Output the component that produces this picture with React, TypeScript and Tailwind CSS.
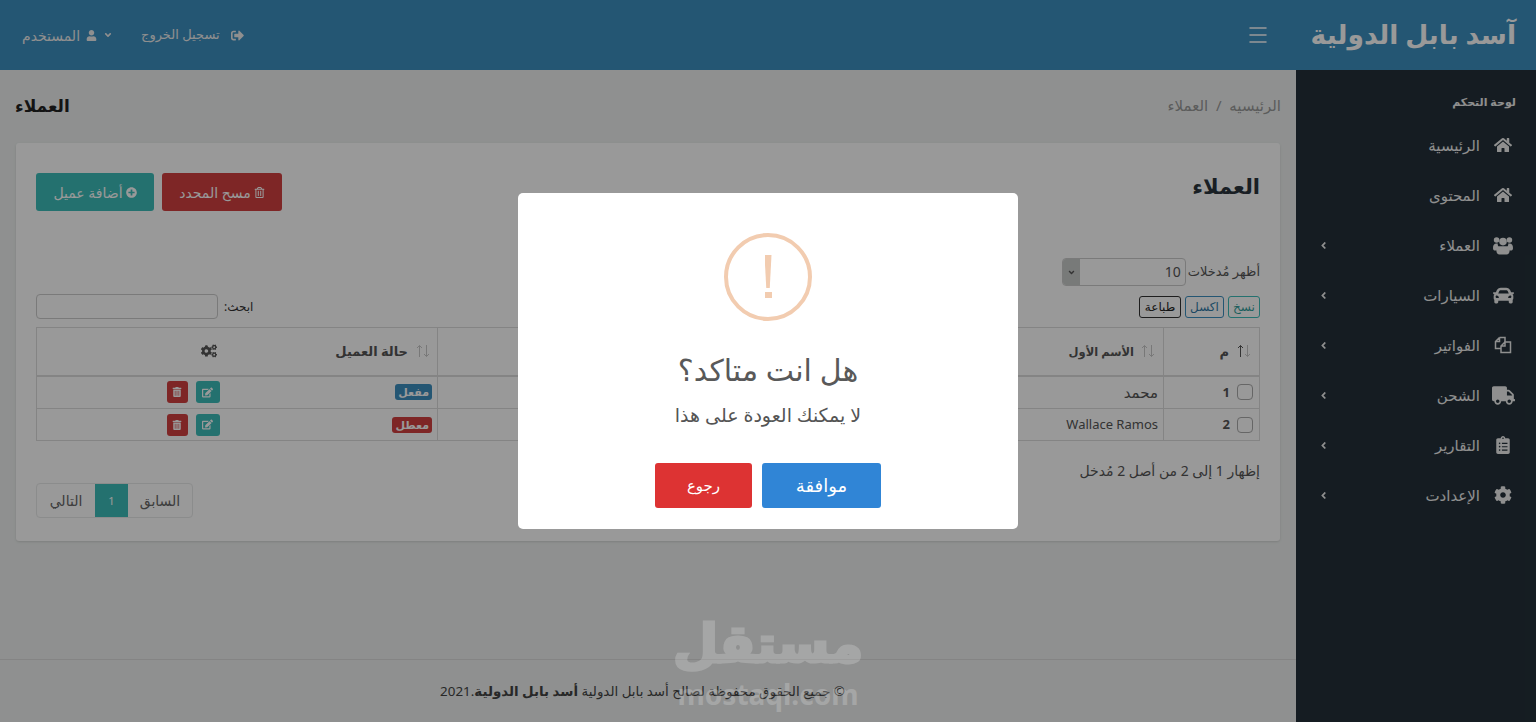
import React from 'react';
import {
    FaAngleDown,
    FaAngleLeft,
    FaCar,
    FaClipboardList,
    FaCog,
    FaCogs,
    FaEdit,
    FaHome,
    FaPlusCircle,
    FaRegTrashAlt,
    FaSignOutAlt,
    FaTrashAlt,
    FaTruck,
    FaUser,
} from 'react-icons/fa';
import { Menu } from 'lucide-react';

const font = 'font-["Noto_Sans","DejaVu_Sans",sans-serif]';

const UsersIcon = () => (
    <svg width="20" height="19" viewBox="0 0 20 19" fill="currentColor">
        <circle cx="3.6" cy="4" r="2.8" />
        <circle cx="16.4" cy="4" r="2.8" />
        <circle cx="10" cy="5.6" r="3.8" />
        <path d="M0 12c0-3 1.2-4.6 3.4-4.6h1.4c-.3 1.400.3 2.800 1.300 3.700-1.400.7-2.100 1.800-2.300 3.300H1.500C.6 14.400 0 13.500 0 12z" />
        <path d="M20 12c0-3-1.200-4.600-3.400-4.600h-1.400c.3 1.400-.3 2.800-1.300 3.700 1.400.7 2.100 1.800 2.300 3.300h2.300c.9 0 1.500-.9 1.500-2.400z" />
        <path d="M6.500 10.200h7c2 0 3.100 1.600 3.100 4.600 0 2.400-1.300 3.800-3.100 3.800h-7c-1.800 0-3.100-1.400-3.100-3.800 0-3 1.100-4.600 3.100-4.600z" />
    </svg>
);

const FilesIcon = () => (
    <svg width="18" height="18" viewBox="0 0 18 18" fill="none" stroke="currentColor" strokeWidth="1.5">
        <path d="M5.500 1.500H11V6M5.500 1.500l-4 4v7H7M5.500 1.500v4h-4" />
        <path d="M11 6h5.500v10.500H7V10zM11 6v4H7" />
    </svg>
);

const menuItems = [
    { label: 'الرئيسية', icon: <FaHome size={18} />, sub: false },
    { label: 'المحتوى', icon: <FaHome size={18} />, sub: false },
    { label: 'العملاء', icon: <UsersIcon />, sub: true },
    { label: 'السيارات', icon: <FaCar size={21} />, sub: true },
    { label: 'الفواتير', icon: <FilesIcon />, sub: true },
    { label: 'الشحن', icon: <FaTruck size={23} />, sub: true },
    { label: 'التقارير', icon: <FaClipboardList size={18} />, sub: true },
    { label: 'الإعدادت', icon: <FaCog size={18} />, sub: true },
];

const rows = [
    { id: 1, name: 'محمد', nameClass: 'text-[15px]', status: 'مفعل', statusClass: 'bg-[#3c8fc0]' },
    { id: 2, name: 'Wallace Ramos', nameClass: 'text-[13px]', status: 'معطل', statusClass: 'bg-[#d24040]' },
];

const SortIcon = ({ active = false }: { active?: boolean }) => (
    <svg width="14" height="14" viewBox="0 0 14 14" fill="none" strokeWidth="1" className="shrink-0">
        <path d="M3.500 13V1.500M1 4l2.500-2.500L6 4" stroke={active ? '#555' : '#c8c8c8'} />
        <path d="M10.500 1v11.500M8 10l2.500 2.500L13 10" stroke="#c8c8c8" />
    </svg>
);

const App: React.FC = () => {
    return (
        <div dir="rtl" className={`relative flex h-[722px] w-[1536px] flex-col overflow-hidden bg-[#eef1f0] text-[#555] ${font}`}>
            <header className="flex h-[70px] shrink-0 items-center bg-[#3c8fc0] text-white">
                <div className="w-[240px] pr-[20px] text-[26.500px] font-bold whitespace-nowrap">آسد بابل الدولية</div>
                <div className="flex flex-1 items-center justify-between pr-[26px] pl-[22px]">
                    <Menu size={24} strokeWidth={1.5} />
                    <div className="flex items-center gap-[28px] text-[13px] text-[#eee]">
                        <span className="flex items-center gap-[11px]">
                            <FaSignOutAlt size={13} />
                            تسجيل الخروج
                        </span>
                        <span className="flex items-center gap-[6px] text-[14px]">
                            <FaAngleDown size={10} />
                            <FaUser size={11} />
                            المستخدم
                        </span>
                    </div>
                </div>
            </header>

            <div className="flex min-h-0 flex-1">
                <aside className="w-[240px] shrink-0 bg-[#233039] text-[#eee]">
                    <div className="pt-[24px] pr-[20px] pb-[10px] text-[11px] leading-[16px] font-bold">لوحة التحكم</div>
                    {menuItems.map((item) => (
                        <div key={item.label} className="flex h-[50px] items-center pr-[21px] pl-[22px] text-[15px]">
                            <span className="flex w-[24px] justify-center">{item.icon}</span>
                            <span className="mr-[11px] flex-1">{item.label}</span>
                            {item.sub && <FaAngleLeft size={11} />}
                        </div>
                    ))}
                </aside>

                <main className="flex min-w-0 flex-1 flex-col">
                    <div className="mb-[2px] flex h-[71px] shrink-0 items-center justify-between px-[15px]">
                        <div className="text-[15px] text-[#999]">الرئيسيه &nbsp;/&nbsp; العملاء</div>
                        <div className="text-[17px] font-bold text-[#222]">العملاء</div>
                    </div>

                    <section className="mx-[16px] h-[398px] rounded-[3px] bg-white px-[20px] pt-[30px] shadow-sm">
                        <div className="flex h-[38px] items-center justify-between">
                            <h2 className="self-start text-[21px] leading-[26px] font-semibold text-[#2a353c]">العملاء</h2>
                            <div className="flex gap-[8px] text-[14px] text-white">
                                <button className="flex h-[38px] w-[120px] items-center justify-center gap-[3px] rounded-[3px] bg-[#d24040]">
                                    <FaRegTrashAlt size={11} />
                                    مسح المحدد
                                </button>
                                <button className="flex h-[38px] w-[118px] items-center justify-center gap-[3px] rounded-[3px] bg-[#3dbdb9]">
                                    <FaPlusCircle size={11} />
                                    أضافة عميل
                                </button>
                            </div>
                        </div>

                        <div className="mt-[47px] flex h-[28px] items-center gap-[2px] text-[13px]">
                            أظهر مُدخلات
                            <div className="flex h-[28px] w-[124px] overflow-hidden rounded-[4px] border border-[#ccc]">
                                <span className="flex-1 pr-[4px] text-[14px] leading-[26px] text-[#555]">10</span>
                                <span className="flex w-[17px] items-center justify-center bg-[#c9cbca]">
                                    <FaAngleDown size={9} />
                                </span>
                            </div>
                        </div>

                        <div className="mt-[8px] flex h-[25px] items-center justify-between">
                            <div className="flex gap-[4px] text-[12px] leading-[20px]">
                                <span className="h-[22px] w-[32px] rounded-[3px] border border-[#3dbdb9] text-center text-[#2f9d9a]">نسخ</span>
                                <span className="h-[22px] w-[39px] rounded-[3px] border border-[#3c8fc0] text-center text-[#2f79a6]">اكسل</span>
                                <span className="h-[22px] w-[42px] rounded-[3px] border border-[#333] text-center text-[#222]">طباعة</span>
                            </div>
                            <div className="flex items-center gap-[6px] text-[12px] text-[#333]">
                                ابحث:
                                <div className="h-[25px] w-[182px] rounded-[4px] border border-[#ccc] bg-white"></div>
                            </div>
                        </div>

                        <table className="mt-[8px] w-[1223px] table-fixed border-collapse text-[12px]">
                            <colgroup>
                                <col className="w-[96px]" />
                                <col className="w-[300px]" />
                                <col className="w-[426px]" />
                                <col className="w-[211px]" />
                                <col className="w-[190px]" />
                            </colgroup>
                            <thead>
                                <tr className="h-[48px] border-b-2 border-[#ddd] font-bold text-[#555]">
                                    <th className="border border-[#ddd] pr-[8px] text-right">
                                        <span className="flex items-center gap-[8px] text-[13px]"><SortIcon active />م</span>
                                    </th>
                                    <th className="border border-[#ddd] pr-[8px] text-right">
                                        <span className="flex items-center gap-[7px] text-[11.500px]"><SortIcon />الأسم الأول</span>
                                    </th>
                                    <th className="border border-[#ddd]"></th>
                                    <th className="border-y border-r border-[#ddd] pr-[7px] text-right">
                                        <span className="flex items-center gap-[8px] text-[13px]"><SortIcon />حالة العميل</span>
                                    </th>
                                    <th className="border-y border-l border-[#ddd] pr-[10px] text-right">
                                        <FaCogs size={16} />
                                    </th>
                                </tr>
                            </thead>
                            <tbody>
                                {rows.map((row, i) => (
                                    <tr key={row.id} className={i === 0 ? 'h-[33px]' : 'h-[32px]'}>
                                        <td className="border border-[#ddd] pr-[6px]">
                                            <span className="flex items-center gap-[7px] text-[13px] font-bold">
                                                <input type="checkbox" className="h-[16px] w-[16px] appearance-none rounded-[4px] border border-[#aaa] bg-white" />
                                                {row.id}
                                            </span>
                                        </td>
                                        <td className={`border border-[#ddd] pr-[5px] ${row.nameClass}`}>{row.name}</td>
                                        <td className="border border-[#ddd]"></td>
                                        <td className="border-y border-r border-[#ddd] pr-[5px]">
                                            <span className={`inline-block rounded-[3px] px-[3px] text-[11px] leading-[16px] font-bold text-white ${row.statusClass}`}>
                                                {row.status}
                                            </span>
                                        </td>
                                        <td className="border-y border-l border-[#ddd] pr-[7px]">
                                            <div className="flex gap-[8px] text-white">
                                                <span className="flex h-[22px] w-[24px] items-center justify-center rounded-[3px] bg-[#3dbdb9]"><FaEdit size={11} /></span>
                                                <span className="flex h-[22px] w-[21px] items-center justify-center rounded-[3px] bg-[#d24040]"><FaTrashAlt size={10} /></span>
                                            </div>
                                        </td>
                                    </tr>
                                ))}
                            </tbody>
                        </table>

                        <div className="mt-[21px] text-[14px] leading-[18px]">إظهار 1 إلى 2 من أصل 2 مُدخل</div>
                        <div className="mt-[3px] flex justify-end">
                            <div className="flex h-[35px] overflow-hidden rounded-[4px] border border-[#e8eaea] text-[14px] leading-[33px] text-[#666]">
                                <span className="w-[64px] text-center">السابق</span>
                                <span className="w-[33px] bg-[#3dbdb9] text-center text-[11px] text-white">1</span>
                                <span className="w-[58px] text-center">التالي</span>
                            </div>
                        </div>
                    </section>

                    <footer className="mt-auto flex h-[63px] shrink-0 items-center justify-center border-t border-[#ddd] pr-[11px] text-[13.400px] text-[#444]">
                        <span>© جميع الحقوق محفوظة لصالح أسد بابل الدولية <b>أسد بابل الدولية</b>.2021</span>
                    </footer>
                </main>
            </div>

            {/* modal backdrop */}
            <div className="absolute inset-0 flex items-start justify-center bg-black/40 pt-[193px]">
                <div className="flex h-[336px] w-[500px] flex-col items-center rounded-[5px] bg-white pt-[40px]">
                    <div className="flex h-[88px] w-[88px] flex-col items-center rounded-full border-4 border-[#f2ccb0] pt-[18px]">
                        <span className="h-[33px] w-[7px] bg-[#f2ccb0] [clip-path:polygon(0_0,100%_0,75%_100%,25%_100%)]"></span>
                        <span className="mt-[4px] h-[6px] w-[7px] bg-[#f2ccb0]"></span>
                    </div>
                    <h1 className="mt-[27px] text-[30px] leading-[44px] font-normal text-[#595959]">هل انت متاكد؟</h1>
                    <p className="mt-[11px] text-[19px] leading-[24px] text-[#545454]">لا يمكنك العودة على هذا</p>
                    <div className="mt-[36px] flex gap-[10px] text-white">
                        <button className="h-[45px] w-[119px] rounded-[3px] bg-[#3085d6] text-[18px]">موافقة</button>
                        <button className="h-[45px] w-[97px] rounded-[3px] bg-[#dd3333] text-[15px]">رجوع</button>
                    </div>
                </div>
            </div>

            {/* watermark */}
            <div className="pointer-events-none absolute top-[606px] left-[660px] flex w-[216px] flex-col items-center text-white opacity-20">
                <span className="text-[52px] leading-[72px] font-bold [-webkit-text-stroke:3px_white]">مستقل</span>
                <span className="text-[28px] leading-[32px] font-bold">mostaql.com</span>
            </div>
        </div>
    );
};

export default App;
